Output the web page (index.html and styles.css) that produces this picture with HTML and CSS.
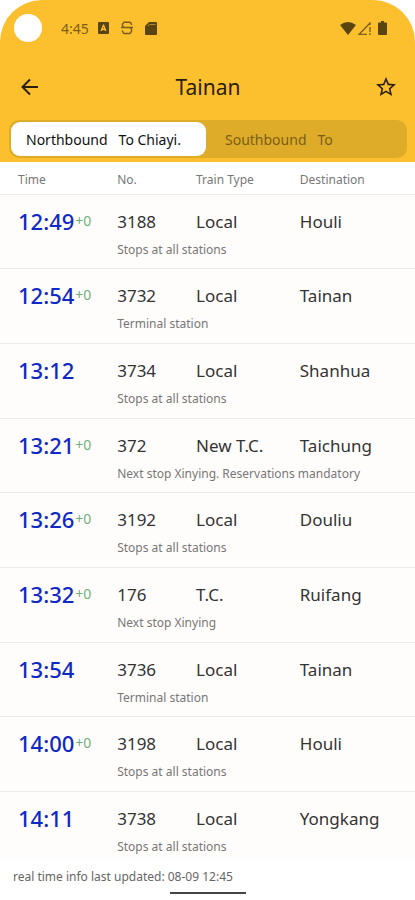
FILE: index.html
```html
<!DOCTYPE html>
<html lang="en">
<head>
<meta charset="utf-8">
<meta name="viewport" content="width=device-width, initial-scale=1">
<title>Tainan</title>
<link rel="stylesheet" href="styles.css">
</head>
<body>
<div class="screen">
  <header class="top">
    <div class="status">
      <span class="camera"></span>
      <span class="clock">4:45</span>
      <div class="status-left">
        <svg width="11" height="12" viewBox="0 0 11 12"><path fill="#5a4410" fill-rule="evenodd" d="M1 0h9a1 1 0 0 1 1 1v10a1 1 0 0 1-1 1H1a1 1 0 0 1-1-1V1a1 1 0 0 1 1-1zM5 2.500L2.500 9h1.500l.5-1h2L7 9h1.500L6 2.500zM5.500 4.500L6 6.500H5z"/></svg>
        <svg width="12" height="14" viewBox="0 0 12 14" fill="none" stroke="#7a5e18" stroke-width="1.400"><path d="M10.500 4V3L9 1.200H3L1.500 3v2L3 6.500h6L10.500 8v2.500L9 12.500H3L1.500 10.500v-1M0 6.500h12"/></svg>
        <svg width="12" height="13" viewBox="0 0 12 13"><path fill="#5a4410" d="M4 0h7a1 1 0 0 1 1 1v11a1 1 0 0 1-1 1H1a1 1 0 0 1-1-1V4z"/><path d="M3 4L4.500 2.500h6" stroke="#b58b22" fill="none"/></svg>
      </div>
      <div class="status-right">
        <svg width="16" height="13" viewBox="0 0 16 13"><path fill="#5a4410" d="M0 3Q8-3 16 3L8 13z"/></svg>
        <svg width="13" height="13" viewBox="0 0 13 13" fill="none" stroke="#7a5e18" stroke-width="1.300"><path d="M9 12.300H1.200L12 1V3M12 5v5M12 11v2"/></svg>
        <svg class="battery" width="9" height="14" viewBox="0 0 9 14"><path fill="#5a4410" d="M3 0h3v1.500h2a1 1 0 0 1 1 1V13a1 1 0 0 1-1 1H1a1 1 0 0 1-1-1V2.500a1 1 0 0 1 1-1h2z"/></svg>
      </div>
    </div>
    <div class="bar">
      <button class="icon-button" type="button" aria-label="Back"><svg width="18" height="18" viewBox="0 0 18 18" fill="none" stroke="#2b210a" stroke-width="2"><path d="M17 9H2M9 1.500L1.500 9L9 16.500"/></svg></button>
      <h1>Tainan</h1>
      <button class="icon-button" type="button" aria-label="Favourite"><svg width="24" height="24" viewBox="0 0 24 24"><path fill="#2b210a" d="M22 9.240l-7.190-.62L12 2 9.190 8.630 2 9.240l5.460 4.730L5.820 21 12 17.270 18.180 21l-1.630-7.030L22 9.240zM12 15.400l-3.760 2.270 1-4.280-3.320-2.880 4.380-.38L12 6.100l1.710 4.040 4.380.38-3.320 2.880 1 4.280L12 15.400z"/></svg></button>
    </div>
    <div class="tabs">
      <button class="tab active" type="button"><span>Northbound</span><span>To Chiayi.</span></button>
      <button class="tab" type="button"><span>Southbound</span><span>To</span></button>
    </div>
  </header>
  <main>
    <table>
      <colgroup><col class="c-time"><col class="c-no"><col class="c-type"><col></colgroup>
      <thead><tr><th>Time</th><th>No.</th><th>Train Type</th><th>Destination</th></tr></thead>
      <tbody>
        <tr class="train"><td><b>12:49</b><i>+0</i></td><td>3188</td><td>Local</td><td>Houli</td></tr>
        <tr class="note"><td></td><td colspan="3">Stops at all stations</td></tr>
      </tbody>
      <tbody>
        <tr class="train"><td><b>12:54</b><i>+0</i></td><td>3732</td><td>Local</td><td>Tainan</td></tr>
        <tr class="note"><td></td><td colspan="3">Terminal station</td></tr>
      </tbody>
      <tbody>
        <tr class="train"><td><b>13:12</b></td><td>3734</td><td>Local</td><td>Shanhua</td></tr>
        <tr class="note"><td></td><td colspan="3">Stops at all stations</td></tr>
      </tbody>
      <tbody>
        <tr class="train"><td><b>13:21</b><i>+0</i></td><td>372</td><td>New T.C.</td><td>Taichung</td></tr>
        <tr class="note"><td></td><td colspan="3">Next stop Xinying. Reservations mandatory</td></tr>
      </tbody>
      <tbody>
        <tr class="train"><td><b>13:26</b><i>+0</i></td><td>3192</td><td>Local</td><td>Douliu</td></tr>
        <tr class="note"><td></td><td colspan="3">Stops at all stations</td></tr>
      </tbody>
      <tbody>
        <tr class="train"><td><b>13:32</b><i>+0</i></td><td>176</td><td>T.C.</td><td>Ruifang</td></tr>
        <tr class="note"><td></td><td colspan="3">Next stop Xinying</td></tr>
      </tbody>
      <tbody>
        <tr class="train"><td><b>13:54</b></td><td>3736</td><td>Local</td><td>Tainan</td></tr>
        <tr class="note"><td></td><td colspan="3">Terminal station</td></tr>
      </tbody>
      <tbody>
        <tr class="train"><td><b>14:00</b><i>+0</i></td><td>3198</td><td>Local</td><td>Houli</td></tr>
        <tr class="note"><td></td><td colspan="3">Stops at all stations</td></tr>
      </tbody>
      <tbody>
        <tr class="train"><td><b>14:11</b></td><td>3738</td><td>Local</td><td>Yongkang</td></tr>
        <tr class="note"><td></td><td colspan="3">Stops at all stations</td></tr>
      </tbody>
    </table>
  </main>
  <footer>
    <p>real time info last updated: 08-09 12:45</p>
    <div class="home"></div>
  </footer>
</div>
</body>
</html>
```
FILE: styles.css
```css
* { box-sizing: border-box; }
body {
  margin: 0;
  background: #fff;
  color: #333;
  font-family: "Noto Sans", "Open Sans", sans-serif;
}
button { font: inherit; border: 0; padding: 0; background: none; }
svg { display: block; }

.top {
  background: #fcc02f;
  border-radius: 42px 42px 0 0;
  padding-bottom: 4px;
}
.status {
  display: flex;
  align-items: center;
  height: 56px;
  padding: 0 28px 0 14px;
}
.camera { width: 28px; height: 28px; border-radius: 50%; background: #fff; }
.clock { margin-left: 19px; font-size: 14px; color: #7a5e18; }
.status-left { display: flex; align-items: center; gap: 12px; margin-left: 9px; }
.status-right { display: flex; align-items: center; gap: 2px; margin-left: auto; }
.battery { margin-left: 5px; }

.bar {
  display: flex;
  align-items: center;
  justify-content: space-between;
  height: 62px;
  padding: 0 17px 0 18px;
}
.icon-button { display: grid; place-items: center; width: 24px; height: 24px; }
h1 { margin: 0; font-size: 21px; font-weight: 400; line-height: 28px; color: #2b210a; }

.tabs {
  display: flex;
  gap: 4px;
  margin: 2px 8px 0 9px;
  padding: 2px;
  height: 38px;
  border-radius: 10px;
  background: #deac29;
}
.tab {
  flex: 1;
  display: flex;
  align-items: center;
  gap: 11px;
  padding: 0 15px;
  border-radius: 9px;
  font-size: 14px;
  color: #7a5e18;
}
.tab.active { background: #fff; color: #111; }

table {
  width: 100%;
  table-layout: fixed;
  border-collapse: separate;
  border-spacing: 0;
}
.c-time { width: 28%; }
.c-no { width: 19%; }
.c-type { width: 25%; }
th {
  height: 33px;
  padding: 2px 0 0 1px;
  border-bottom: 1px solid #ececea;
  font-size: 12px;
  font-weight: 400;
  text-align: left;
  color: #777;
}
td { padding: 0 0 0 1px; background: #fffdfb; }
th:first-child, td:first-child { padding-left: 18px; }
.train td { height: 44px; padding-top: 10px; font-size: 17px; line-height: 24px; white-space: nowrap; }
.train td:first-child { padding-top: 8px; font-size: 0; }
.train b { font-size: 22px; font-weight: 500; color: #1029c4; vertical-align: middle; }
.train i { padding-left: 1px; font-size: 14px; font-style: normal; color: #6fb07c; vertical-align: middle; }
.note td {
  height: 31px;
  padding-bottom: 9px;
  border-bottom: 1px solid #ececea;
  font-size: 12px;
  line-height: 16px;
  color: #777;
}
tbody:nth-of-type(3n+1) .note td { height: 30px; padding-bottom: 8px; }
tbody:last-of-type .note td { height: 24px; padding-bottom: 3px; border-bottom: 0; }

footer { padding: 9px 13px 0; }
footer p { margin: 0; font-size: 12px; line-height: 16px; color: #666; }
.home { width: 76px; height: 2px; margin: 7px auto 0; background: #444; }
```
